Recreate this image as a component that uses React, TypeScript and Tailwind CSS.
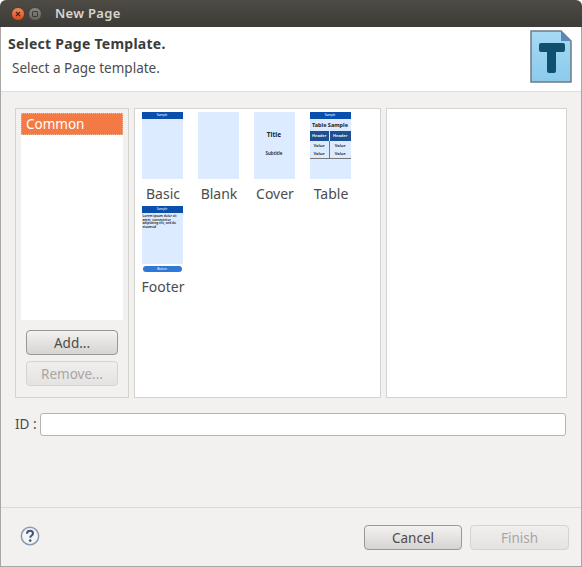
const font = { fontFamily: '"Noto Sans", "DejaVu Sans", sans-serif' }

function Thumb({ children, className = '' }: { children?: React.ReactNode; className?: string }) {
  return <div className={`w-[41px] h-[67px] bg-[#dcebff] overflow-hidden ${className}`}>{children}</div>
}

function BlueBar({ text }: { text: string }) {
  return (
    <div className="h-[7px] bg-[#0b4fae] text-white text-[3px] leading-[7px] text-center">{text}</div>
  )
}

function Template({ label, children }: { label: string; children?: React.ReactNode }) {
  return (
    <div className="w-[56px] h-[94px] flex flex-col items-center">
      {children}
      <div className="mt-[5px] pl-[2px] text-[14px] leading-[20px] text-[#4c4c4c] whitespace-nowrap">{label}</div>
    </div>
  )
}

function GtkButton({ label, disabled, className = '' }: { label: string; disabled?: boolean; className?: string }) {
  return (
    <div
      className={`flex items-center justify-center rounded-[4px] border text-[13.5px] pt-[1px] ${
        disabled
          ? 'border-[#d5d3d0] bg-gradient-to-b from-[#f0efee] to-[#e4e3e1] text-[#a8a6a4]'
          : 'border-[#9a9894] bg-gradient-to-b from-[#f3f2f1] to-[#d6d4d1] text-[#4c4c4c]'
      } ${className}`}
    >
      {label}
    </div>
  )
}

export default function App() {
  return (
    <div style={font} className="w-[582px] h-[567px] bg-white overflow-hidden">
      <div className="h-[27px] rounded-t-[6px] bg-gradient-to-b from-[#4e4b45] to-[#3c3b37] flex items-center pl-[11px]">
        <div className="w-[14px] h-[14px] rounded-full bg-gradient-to-b from-[#f28a5c] to-[#dd4814] border border-[#5a3a28] flex items-center justify-center">
          <svg width="6" height="6" viewBox="0 0 6 6">
            <path d="M1 1L5 5M5 1L1 5" stroke="#4a2a1a" strokeWidth="1.3" />
          </svg>
        </div>
        <div className="ml-[3px] w-[14px] h-[14px] rounded-full bg-gradient-to-b from-[#8a8882] to-[#65635e] border border-[#45433f] flex items-center justify-center">
          <div className="w-[6px] h-[6px] border border-[#3c3b37] rounded-[1px]" />
        </div>
        <div className="ml-[13px] text-[13px] font-semibold text-[#d8d5cd] tracking-[0.3px]">New Page</div>
      </div>

      <div className="h-[540px] flex flex-col bg-[#f2f1f0] border-l border-b border-r border-[#a9a7a3]">
        <div className="h-[65px] shrink-0 bg-white border-b border-[#e0dedb] flex justify-between pl-[7px] pr-[9px]">
          <div>
            <div className="mt-[7px] text-[14px] leading-[19px] font-bold tracking-[0.25px] text-[#3c3c3c]">Select Page Template.</div>
            <div className="mt-[6px] ml-[4px] text-[13.5px] leading-[19px] text-[#4c4c4c]">Select a Page template.</div>
          </div>
          <svg className="mt-[3px]" width="42" height="53" viewBox="0 0 42 53">
            <defs>
              <linearGradient id="page" x1="0" y1="0" x2="0" y2="1">
                <stop offset="0" stopColor="#a6daf5" />
                <stop offset="1" stopColor="#8ccaec" />
              </linearGradient>
            </defs>
            <path d="M1 1H31L41 11V52H1Z" fill="url(#page)" stroke="#6f7a85" strokeWidth="1.5" />
            <path d="M31 1V11H41Z" fill="#5d87b8" />
            <path d="M11 13H33Q35 13 35 15V20Q35 22 33 22H26V41Q26 43 24 43H19Q17 43 17 41V22H11Q9 22 9 20V15Q9 13 11 13Z" fill="#0f4f70" />
          </svg>
        </div>

        <div className="flex mt-[16px] ml-[14px] h-[290px] gap-[5px]">
          <div className="w-[114px] border border-[#d5d3d0] px-[5px] pt-[4px] flex flex-col">
            <div className="h-[207px] bg-white">
              <div className="h-[22px] bg-[#f37a45] text-white text-[13.5px] leading-[20px] pl-[4px] border border-dotted border-[#f7b08f]">
                Common
              </div>
            </div>
            <GtkButton label="Add..." className="mt-[10px] mx-[5px] h-[25px]" />
            <GtkButton label="Remove..." disabled className="mt-[6px] mx-[5px] h-[25px]" />
          </div>

          <div className="w-[247px] bg-white border border-[#d5d3d0] pt-[3px]">
            <div className="flex flex-wrap -ml-[1px]">
              <Template label="Basic">
                <Thumb>
                  <BlueBar text="Sample" />
                </Thumb>
              </Template>
              <Template label="Blank">
                <Thumb />
              </Template>
              <Template label="Cover">
                <Thumb className="flex flex-col items-center text-[#222]">
                  <div className="mt-[19px] text-[6.5px] leading-[8px] font-bold">Title</div>
                  <div className="mt-[11px] text-[4.5px] leading-[6px] font-semibold">Subtitle</div>
                </Thumb>
              </Template>
              <Template label="Table">
                <Thumb>
                  <BlueBar text="Sample" />
                  <div className="h-[12px] text-[5.5px] leading-[12px] font-bold text-center text-[#222]">Table Sample</div>
                  <div className="grid grid-cols-2 text-[4px] font-semibold text-center">
                    <div className="h-[10px] leading-[10px] bg-[#1f4f8f] text-white border-r border-[#dceafd]">Header</div>
                    <div className="h-[10px] leading-[10px] bg-[#1f4f8f] text-white">Header</div>
                    <div className="h-[9px] leading-[9px] text-[#222] border-r border-[#777]">Value</div>
                    <div className="h-[9px] leading-[9px] text-[#222]">Value</div>
                    <div className="h-[9px] leading-[8px] text-[#222] border-r border-b border-[#777]">Value</div>
                    <div className="h-[9px] leading-[8px] text-[#222] border-b border-[#777]">Value</div>
                  </div>
                </Thumb>
              </Template>
              <Template label="Footer">
                <div className="w-[41px] h-[66px] flex flex-col">
                  <div className="w-[41px] h-[58px] bg-[#dcebff] overflow-hidden">
                    <BlueBar text="Sample" />
                    <div className="mt-[2px] px-[1px] text-[3.2px] leading-[3.5px] font-semibold text-[#222]">
                      Lorem ipsum dolor sit amet, consectetur adipiscing elit, sed do eiusmod
                    </div>
                  </div>
                  <div className="mt-[2px] mx-[1px] h-[6px] rounded-full bg-[#2f78d8] text-white text-[3px] leading-[6px] text-center">
                    Button
                  </div>
                </div>
              </Template>
            </div>
          </div>

          <div className="w-[181px] bg-white border border-[#d5d3d0]" />
        </div>

        <div className="flex items-center mt-[15px] ml-[14px] h-[23px]">
          <div className="w-[25px] text-[13.5px] text-[#4c4c4c]">ID :</div>
          <div className="w-[526px] h-[23px] bg-white border border-[#b5b3af] rounded-[3px]" />
        </div>

        <div className="mt-[71px] border-t border-[#dcdad7] flex-1 flex items-start justify-between pl-[19px]">
          <svg className="mt-[18px]" width="20" height="20" viewBox="0 0 20 20">
            <circle cx="10" cy="10" r="8.7" fill="#f4f4f6" stroke="#8a9ab5" strokeWidth="1.5" />
            <path d="M7 7.8C7 5.8 8.4 4.8 10 4.8C11.8 4.8 13 5.9 13 7.4C13 9.4 10.2 9.6 10.2 11.8" fill="none" stroke="#3f5479" strokeWidth="2" />
            <circle cx="10.2" cy="14.6" r="1.3" fill="#3f5479" />
          </svg>
          <div className="flex gap-[8px] mt-[17px] mr-[12px]">
            <GtkButton label="Cancel" className="w-[98px] h-[25px]" />
            <GtkButton label="Finish" disabled className="w-[99px] h-[25px]" />
          </div>
        </div>
      </div>
    </div>
  )
}
